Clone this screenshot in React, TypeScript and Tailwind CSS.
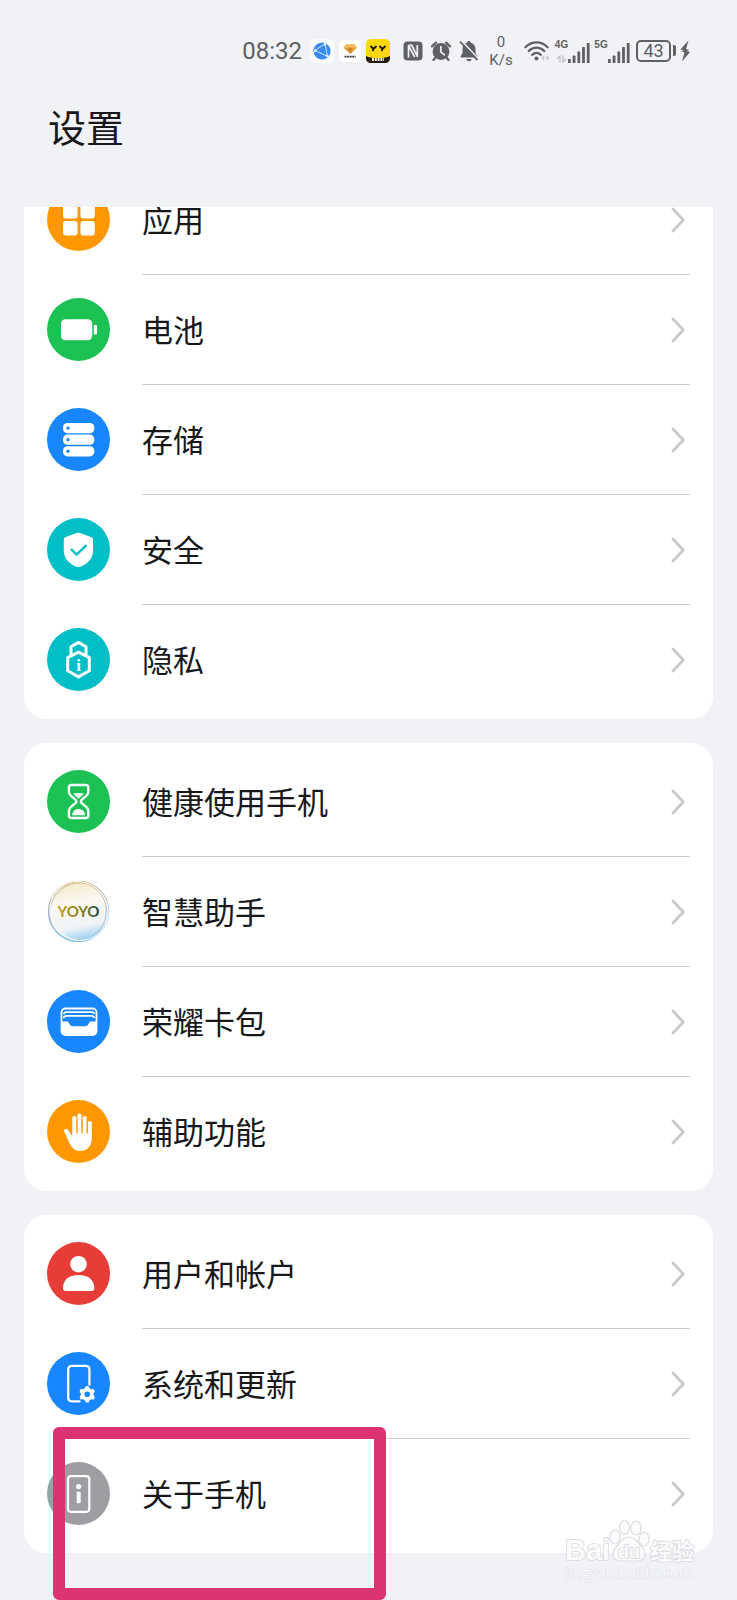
import React from 'react';

interface SettingsItem {
  id: string;
  label: string;
  color: string;
  icon: React.ReactNode;
  highlighted?: boolean;
}

const settingsGroups: { id: string; items: SettingsItem[] }[] = [
  {
    id: 'device',
    items: [
      {
        id: 'apps',
        label: '应用',
        color: 'bg-[#ff9800]',
        icon: (
          <g fill="#fff">
            <rect x="16" y="16" width="14.6" height="14.4" rx="3" />
            <rect x="33.4" y="16" width="14.4" height="14.4" rx="3" />
            <rect x="16" y="33" width="14.6" height="14.4" rx="3" />
            <rect x="33.4" y="33" width="14.4" height="14.4" rx="3" />
          </g>
        ),
      },
      {
        id: 'battery',
        label: '电池',
        color: 'bg-[#1bc253]',
        icon: (
          <g fill="#fff">
            <rect x="14" y="21.3" width="31.2" height="21" rx="4.5" />
            <rect x="46.8" y="27" width="3.2" height="9.4" rx="0.8" />
          </g>
        ),
      },
      {
        id: 'storage',
        label: '存储',
        color: 'bg-[#1886fe]',
        icon: (
          <g>
            <rect x="16" y="15" width="31.3" height="10.2" rx="4.5" fill="#fff" />
            <rect x="16" y="26.6" width="31.3" height="10.2" rx="4.5" fill="#fff" />
            <rect x="16" y="38.2" width="31.3" height="10.2" rx="4.5" fill="#fff" />
            <circle cx="21" cy="20.1" r="1.7" fill="#1886fe" />
            <circle cx="21" cy="31.7" r="1.7" fill="#1886fe" />
            <circle cx="21" cy="43.3" r="1.7" fill="#1886fe" />
          </g>
        ),
      },
      {
        id: 'security',
        label: '安全',
        color: 'bg-[#02bfc7]',
        icon: (
          <g>
            <path
              d="M31.4 14.4c.6 0 1 .2 1.6.5l11 4c1.4.5 2 1.3 2 2.7v10.6c0 8-5 13.5-12.6 16.5-1.5.5-2.5.5-4 0C21.8 45.7 16.8 40.2 16.8 32.2V21.6c0-1.4.6-2.2 2-2.7l11-4c.6-.3 1-.5 1.6-.5z"
              fill="#fff"
            />
            <path d="M24 31.2l5.6 5.4 9.9-9.4" fill="none" stroke="#02bfc7" strokeWidth="2.4" />
          </g>
        ),
      },
      {
        id: 'privacy',
        label: '隐私',
        color: 'bg-[#02bfc7]',
        icon: (
          <g fill="none" stroke="#fff" strokeWidth="3" strokeLinejoin="round">
            <path d="M24 27V18.8l7.5-4.4 7.5 4.4V27" />
            <path d="M31.5 24.2l10.8 5.4v13.2l-10.8 6.1-10.8-6.1V29.6z" fill="#02bfc7" />
            <text x="31.5" y="42.6" textAnchor="middle" fontSize="17" fontWeight="700" fontFamily="Liberation Serif, serif" fill="#fff" stroke="none">
              i
            </text>
          </g>
        ),
      },
    ],
  },
  {
    id: 'services',
    items: [
      {
        id: 'digital-balance',
        label: '健康使用手机',
        color: 'bg-[#1bc253]',
        icon: (
          <g>
            <path
              d="M24.5 15h14.2c1.600 0 2.6 1 2.6 2.5v4.2c0 2-.7 3-2 4.1l-4.5 3.8c-1.2 1.1-1.2 2.5 0 3.6l4.5 3.8c1.3 1.1 2 2.1 2 4.1v4.4c0 1.5-1 2.5-2.6 2.5H24.5c-1.6 0-2.6-1-2.6-2.5v-4.4c0-2 .7-3 2-4.1l4.5-3.8c1.2-1.1 1.2-2.5 0-3.6l-4.5-3.8c-1.3-1.1-2-2.1-2-4.1v-4.2c0-1.500 1-2.5 2.6-2.5z"
              fill="none"
              stroke="#fff"
              strokeWidth="2.4"
            />
            <path d="M26 23.6c3-.9 8.200-.9 11.200 0l-5.6 5.200z" fill="#fff" />
            <path d="M25.2 45.2c.2-3.700 2.700-6.300 6.400-6.300s6.200 2.600 6.400 6.300z" fill="#fff" />
          </g>
        ),
      },
      {
        id: 'assistant',
        label: '智慧助手',
        color: 'bg-white',
        icon: (
          <g>
            <defs>
              <linearGradient id="yoyoFill" x1="0.1" y1="0" x2="0.3" y2="1">
                <stop offset="0" stopColor="#f5e6c4" />
                <stop offset="0.4" stopColor="#fbf8f1" />
                <stop offset="0.8" stopColor="#f0f4f8" />
                <stop offset="1" stopColor="#a9d4f0" />
              </linearGradient>
              <linearGradient id="yoyoRing" x1="0" y1="0" x2="0.3" y2="1">
                <stop offset="0" stopColor="#d9b45c" />
                <stop offset="0.45" stopColor="#a9b1bb" />
                <stop offset="1" stopColor="#8ec5ea" />
              </linearGradient>
              <linearGradient id="yoyoText" x1="0" y1="0" x2="1" y2="0">
                <stop offset="0" stopColor="#c8a030" />
                <stop offset="0.5" stopColor="#92801e" />
                <stop offset="0.75" stopColor="#6b742f" />
                <stop offset="1" stopColor="#0f3e50" />
              </linearGradient>
            </defs>
            <circle cx="31.5" cy="31.5" r="30" fill="url(#yoyoFill)" stroke="url(#yoyoRing)" strokeWidth="1.4" />
            <ellipse cx="31" cy="32" rx="28" ry="29.5" fill="none" stroke="url(#yoyoRing)" strokeWidth="0.8" transform="rotate(28 31 32)" />
            <ellipse cx="32" cy="31" rx="28.5" ry="30" fill="none" stroke="#fff" strokeWidth="1" transform="rotate(-40 32 31)" />
            <text x="31.5" y="36.6" textAnchor="middle" fontSize="15" fontWeight="700" fontFamily="Lato, sans-serif" fill="url(#yoyoText)">
              YOYO
            </text>
          </g>
        ),
      },
      {
        id: 'wallet',
        label: '荣耀卡包',
        color: 'bg-[#1886fe]',
        icon: (
          <g>
            <rect x="14.5" y="18.5" width="35" height="26.5" rx="4" fill="none" stroke="#fff" strokeWidth="1.8" />
            <path d="M16.5 24c.5-1.200 1.400-1.800 3-1.800h25c1.600 0 2.500.6 3 1.800M16.500 28c.5-1.500 1.400-2.200 3-2.200h25c1.600 0 2.500.7 3 2.200" fill="none" stroke="#fff" strokeWidth="1.700" />
            <path d="M15 31.500h4.500c1.500 0 2.300.5 2.700 1.800.5 2.100 1.800 3 4 3h11.600c2.200 0 3.500-.9 4-3 .4-1.300 1.200-1.800 2.700-1.800H49V41c0 3-1.500 4.300-4.300 4.300H19.300C16.500 45.300 15 44 15 41z" fill="#fff" />
          </g>
        ),
      },
      {
        id: 'accessibility',
        label: '辅助功能',
        color: 'bg-[#ff9800]',
        icon: (
          <g>
            <g fill="none" stroke="#fff" strokeWidth="4.2" strokeLinecap="round">
              <path d="M27.4 18.2V36M32.5 15.5V36M37.6 18.2V36" />
              <path d="M42.8 23V36" strokeWidth="4" />
            </g>
            <path d="M25.3 33.5h19.5V38c0 8-4.6 13-11.4 13-5.4 0-8.3-2.8-10.600-7.300L17.3 31.7c-1-2.200 1.900-4 3.500-2 1.700 2.200 3 4.400 4.500 6.600z" fill="#fff" />
            <path d="M29.950 19v14M35.050 19v14M40.2 22v11" stroke="#ff9800" strokeWidth="1" />
          </g>
        ),
      },
    ],
  },
  {
    id: 'system',
    items: [
      {
        id: 'users',
        label: '用户和帐户',
        color: 'bg-[#e83c38]',
        icon: (
          <g fill="#fff">
            <circle cx="31.5" cy="22.2" r="8.3" />
            <path d="M16 46.3C16 38 21.5 33 31.6 33s15.7 5 15.7 13.3c0 1.8-.9 2.7-2.7 2.7H18.7C16.9 49 16 48.1 16 46.3z" />
          </g>
        ),
      },
      {
        id: 'system-updates',
        label: '系统和更新',
        color: 'bg-[#1886fe]',
        icon: (
          <g>
            <path d="M42.4 33V17.6c0-2.6-1.2-3.8-3.8-3.8H25c-2.6 0-3.8 1.2-3.8 3.8v28c0 2.6 1.2 3.8 3.8 3.8h7.6" fill="none" stroke="#fff" strokeWidth="2.2" strokeLinecap="round" />
            <circle cx="40.2" cy="42.2" r="9" fill="#1886fe" />
            <circle cx="40.2" cy="42.2" r="4.6" fill="none" stroke="#fff" strokeWidth="3.6" />
            <path
              d="M40.2 36.1v.1M40.2 48.300v.1M34.900 39.2v.1M45.5 39.2v.1M34.900 45.300v.1M45.5 45.300v.1"
              stroke="#fff"
              strokeWidth="4.4"
              strokeLinecap="round"
            />
          </g>
        ),
      },
      {
        id: 'about-phone',
        label: '关于手机',
        color: 'bg-[#9d9da2]',
        highlighted: true,
        icon: (
          <g fill="#fff">
            <rect x="21" y="14.2" width="21.3" height="35.6" rx="3" fill="none" stroke="#fff" strokeWidth="2.2" />
            <circle cx="31.6" cy="24.5" r="2.6" />
            <rect x="29.7" y="29.8" width="4" height="11.4" rx="0.8" />
          </g>
        ),
      },
    ],
  },
];

function SignalBars() {
  return (
    <svg viewBox="0 0 22 20" className="h-5 w-[22px]" fill="currentColor" aria-hidden="true">
      <rect x="0" y="16" width="2.8" height="4" rx="0.6" />
      <rect x="4.7" y="12.5" width="2.8" height="7.5" rx="0.6" />
      <rect x="9.4" y="8.5" width="2.8" height="11.5" rx="0.6" />
      <rect x="14.1" y="4" width="2.8" height="16" rx="0.6" />
      <rect x="18.8" y="0" width="2.8" height="20" rx="0.6" />
    </svg>
  );
}

function StatusBar() {
  return (
    <div className="flex h-[101px] items-center justify-end pr-[47px] text-[#5e6064]">
      <time className="font-[Roboto,sans-serif] text-[24px] leading-none">08:32</time>

      {/* Notification icons */}
      <div className="ml-2 flex items-center gap-[5px]">
        <svg viewBox="0 0 24 24" className="size-6" aria-hidden="true">
          <rect width="24" height="24" rx="5" fill="#f9fafc" />
          <circle cx="12" cy="12" r="8.6" fill="#3a8af0" />
          <path d="M5 11.5l10-6.800 2.500 12.600zM5 11.500L3.500 14M15 4.700L14 3.500M17.500 17.300l.5 1.200" stroke="#d9ecff" strokeWidth="0.9" fill="none" />
          <circle cx="5.3" cy="11.5" r="1.3" fill="#d9ecff" />
          <circle cx="15" cy="5.5" r="1.2" fill="#d9ecff" />
          <circle cx="17" cy="16.8" r="1.3" fill="#d9ecff" />
        </svg>
        <svg viewBox="0 0 22 24" className="h-6 w-[22px]" aria-hidden="true">
          <rect y="1" width="22" height="22" rx="5" fill="#fff" />
          <path d="M7.5 5H15l3 3.800L11.300 15 4.600 8.800z" fill="#e0a03a" />
          <path d="M7.5 5H15l3 3.800H4.600z" fill="#f0bd62" />
          <path d="M9 8.800h4.600L11.300 15z" fill="#c9822b" />
          <path d="M5.5 17.600h11" stroke="#333" strokeWidth="1.6" strokeDasharray="2 0.6" />
        </svg>
        <svg viewBox="0 0 24 24" className="size-6" aria-hidden="true">
          <rect width="24" height="24" rx="5" fill="#fcd80c" />
          <path d="M0 17c3 1.500 5 2 12 2s9-.5 12-2v2c0 3-2 5-5 5H5c-3 0-5-2-5-5z" fill="#1d1808" />
          <path d="M4.500 7l3 3 3-3M7.500 10l-1 2M13.500 7l3 3 3-3M16.500 10l-1 2" stroke="#1d1808" strokeWidth="1.8" fill="none" />
          <path d="M6 20.500h12" stroke="#f5f0dc" strokeWidth="3" strokeDasharray="2 0.8" />
        </svg>
      </div>

      {/* NFC, alarm, muted */}
      <div className="ml-[13px] flex items-center gap-2">
        <svg viewBox="0 0 20 20" className="size-5" aria-hidden="true">
          <rect x="0.5" y="0.5" width="19" height="19" rx="4" fill="currentColor" />
          <path d="M5.500 16.500V4.500l3.200-.4 5.600 11.300V4M5.700 5l6 11" fill="none" stroke="#f1f2f6" strokeWidth="1.7" strokeLinejoin="round" />
        </svg>
        <svg viewBox="0 0 20 20" className="size-5" aria-hidden="true">
          <circle cx="10" cy="10.5" r="8.4" fill="currentColor" />
          <path d="M1 5.400L5 1.600M19 5.400l-4-3.800M4.500 16.500L2.500 19M15.500 16.500l2 2.500" stroke="currentColor" strokeWidth="2.2" strokeLinecap="round" />
          <path d="M9.800 5.500v5.300l3.600 3" fill="none" stroke="#f1f2f6" strokeWidth="1.7" strokeLinecap="round" />
        </svg>
        <svg viewBox="0 0 20 22" className="h-[22px] w-5" aria-hidden="true">
          <path d="M10 1c.9 0 1.500.5 1.600 1.400C14.700 3.200 16.500 5.500 16.500 9v4l1.800 3.200c.3.800 0 1.300-.8 1.300h-15c-.8 0-1.100-.5-.8-1.300L3.500 13V9c0-3.500 1.800-5.800 4.900-6.600C8.500 1.500 9.100 1 10 1zM7.300 19h5.400c-.4 1.500-1.400 2.200-2.700 2.200S7.700 20.500 7.300 19z" fill="currentColor" />
          <path d="M2.500.8l17 18" stroke="#f1f2f6" strokeWidth="1.6" />
          <path d="M1 1.600l17.500 18.600" stroke="currentColor" strokeWidth="1.7" />
        </svg>
      </div>

      <div className="ml-[10px] flex w-6 flex-col items-center font-[Roboto,sans-serif] text-[15px] leading-[18px]">
        <span>0</span>
        <span>K/s</span>
      </div>

      <svg viewBox="0 0 26 22" className="ml-[11px] h-[22px] w-[26px]" aria-hidden="true">
        <g fill="none" stroke="currentColor" strokeWidth="2.3" strokeLinecap="round">
          <path d="M1.400 7.200C7.500.7 17.500.7 23.600 7.200M4.800 11c4.300-4.500 11.100-4.500 15.400 0M8.300 14.800c2.500-2.600 5.900-2.600 8.400 0" />
        </g>
        <circle cx="12.5" cy="18.6" r="2" fill="currentColor" />
        <path d="M20.200 15.500v5l-3-2.500zM22.300 15.500v5l3-2.500z" fill="#c4c5c9" />
      </svg>

      {/* Mobile networks */}
      <div className="ml-[5px] flex items-end">
        <div className="flex h-6 w-[13px] flex-col items-center justify-between font-['Liberation_Sans',sans-serif] text-[10px] leading-[12px] font-bold">
          <span>4G</span>
          <svg viewBox="0 0 10 8" className="h-2 w-[10px]" aria-hidden="true">
            <path d="M3 7.500V1L0 4M6 .5V7l3-3" fill="none" stroke="#bfc0c4" strokeWidth="1.4" />
          </svg>
        </div>
        <SignalBars />
        <div className="ml-1 flex h-6 w-[14px] flex-col items-center font-['Liberation_Sans',sans-serif] text-[10px] leading-[12px] font-bold">
          <span>5G</span>
        </div>
        <SignalBars />
      </div>

      {/* Battery */}
      <div className="ml-[6px] flex items-center gap-[2px]">
        <span className="flex h-[22px] w-[35px] items-center justify-center rounded-[5px] border-2 border-current font-[Roboto,sans-serif] text-[18px] leading-none">
          43
        </span>
        <span className="h-[11px] w-[3px] rounded-r-[2px] bg-current" />
      </div>
      <svg viewBox="0 0 10 22" className="ml-1 h-[22px] w-[10px]" fill="currentColor" aria-hidden="true">
        <path d="M8.500.5L.5 9.600l3.600.8-3 .9 3.400 1.300L2 21.500l8-9.600-3.500-.9 3-1L6 9z" />
      </svg>
    </div>
  );
}

function SettingsRow({ item, divider }: { item: SettingsItem; divider: boolean }) {
  return (
    <li className="relative">
      <button type="button" className="flex h-[110px] w-full items-center gap-8 text-left">
        <span className={`mb-px size-[63px] shrink-0 rounded-full ${item.color}`}>
          <svg viewBox="0 0 63 63" className="size-full" aria-hidden="true">
            {item.icon}
          </svg>
        </span>
        <span className={`flex h-full flex-1 items-center justify-between border-b ${divider ? 'border-[#cccccc]' : 'border-transparent'}`}>
          <span className="pt-1 text-[31px] leading-none text-[#18181a]">{item.label}</span>
          <svg viewBox="0 0 14 26" className="mr-[5px] h-[26px] w-[14px]" aria-hidden="true">
            <path d="M2 2l10.300 11L2 24" fill="none" stroke="#c9c9ca" strokeWidth="2.8" strokeLinecap="round" strokeLinejoin="round" />
          </svg>
        </span>
      </button>
      {item.highlighted && (
        <div className="pointer-events-none absolute -top-3 left-[6px] h-[173px] w-[333px] rounded-[6px] border-12 border-[#dc3372]" />
      )}
    </li>
  );
}

function Watermark() {
  return (
    <svg viewBox="0 0 136 66" className="pointer-events-none absolute right-[37px] bottom-4 h-[66px] w-[136px]" aria-label="Baidu 经验">
      <g fill="#fbfbfc" stroke="#dcdde1" strokeWidth="1.2">
        <ellipse cx="51" cy="19" rx="5" ry="7" />
        <ellipse cx="60.5" cy="9.5" rx="5" ry="7" />
        <ellipse cx="72" cy="10" rx="5" ry="7" />
        <ellipse cx="80" cy="21" rx="5" ry="7" />
        <path d="M65 19c5 0 8 4 11 8 3 3 5 5 5 9 0 5-3 7-8 7H57c-5 0-8-2-8-7 0-4 2-6 5-9 3-4 6-8 11-8z" />
      </g>
      <g fill="#fbfbfc" stroke="#d9dade" strokeWidth="1.6" paintOrder="stroke" fontWeight="700">
        <text x="1" y="42" fontSize="29" fontFamily="Liberation Sans, sans-serif">Bai</text>
        <text x="65" y="40" fontSize="18" textAnchor="middle" fontFamily="Liberation Sans, sans-serif">du</text>
        <text x="86" y="41" fontSize="22" fontFamily="Noto Sans CJK SC, sans-serif">经验</text>
      </g>
      <text x="1" y="60" fontSize="15" fontFamily="Open Sans, sans-serif" fill="#fbfbfc" stroke="#dfe0e4" strokeWidth="1.2" paintOrder="stroke">
        jingyan.baidu.com
      </text>
    </svg>
  );
}

export default function App() {
  return (
    <div className="relative min-h-screen overflow-hidden bg-[#f1f2f6] font-['Liberation_Sans','Noto_Sans_CJK_SC',sans-serif]">
      <header>
        <StatusBar />
        <h1 className="px-12 pb-[50px] text-[38px] leading-[56px] text-[#18181a]">设置</h1>
      </header>

      {/* The list is scrolled, so the first card runs under the header */}
      <main className="overflow-hidden px-6 pb-[47px]">
        <div className="-mt-[46px] flex flex-col gap-6">
          {settingsGroups.map((group) => (
            <ul key={group.id} className="rounded-[22px] bg-white px-[23px] py-1">
              {group.items.map((item, index) => (
                <SettingsRow key={item.id} item={item} divider={index < group.items.length - 1} />
              ))}
            </ul>
          ))}
        </div>
      </main>

      <Watermark />
    </div>
  );
}
